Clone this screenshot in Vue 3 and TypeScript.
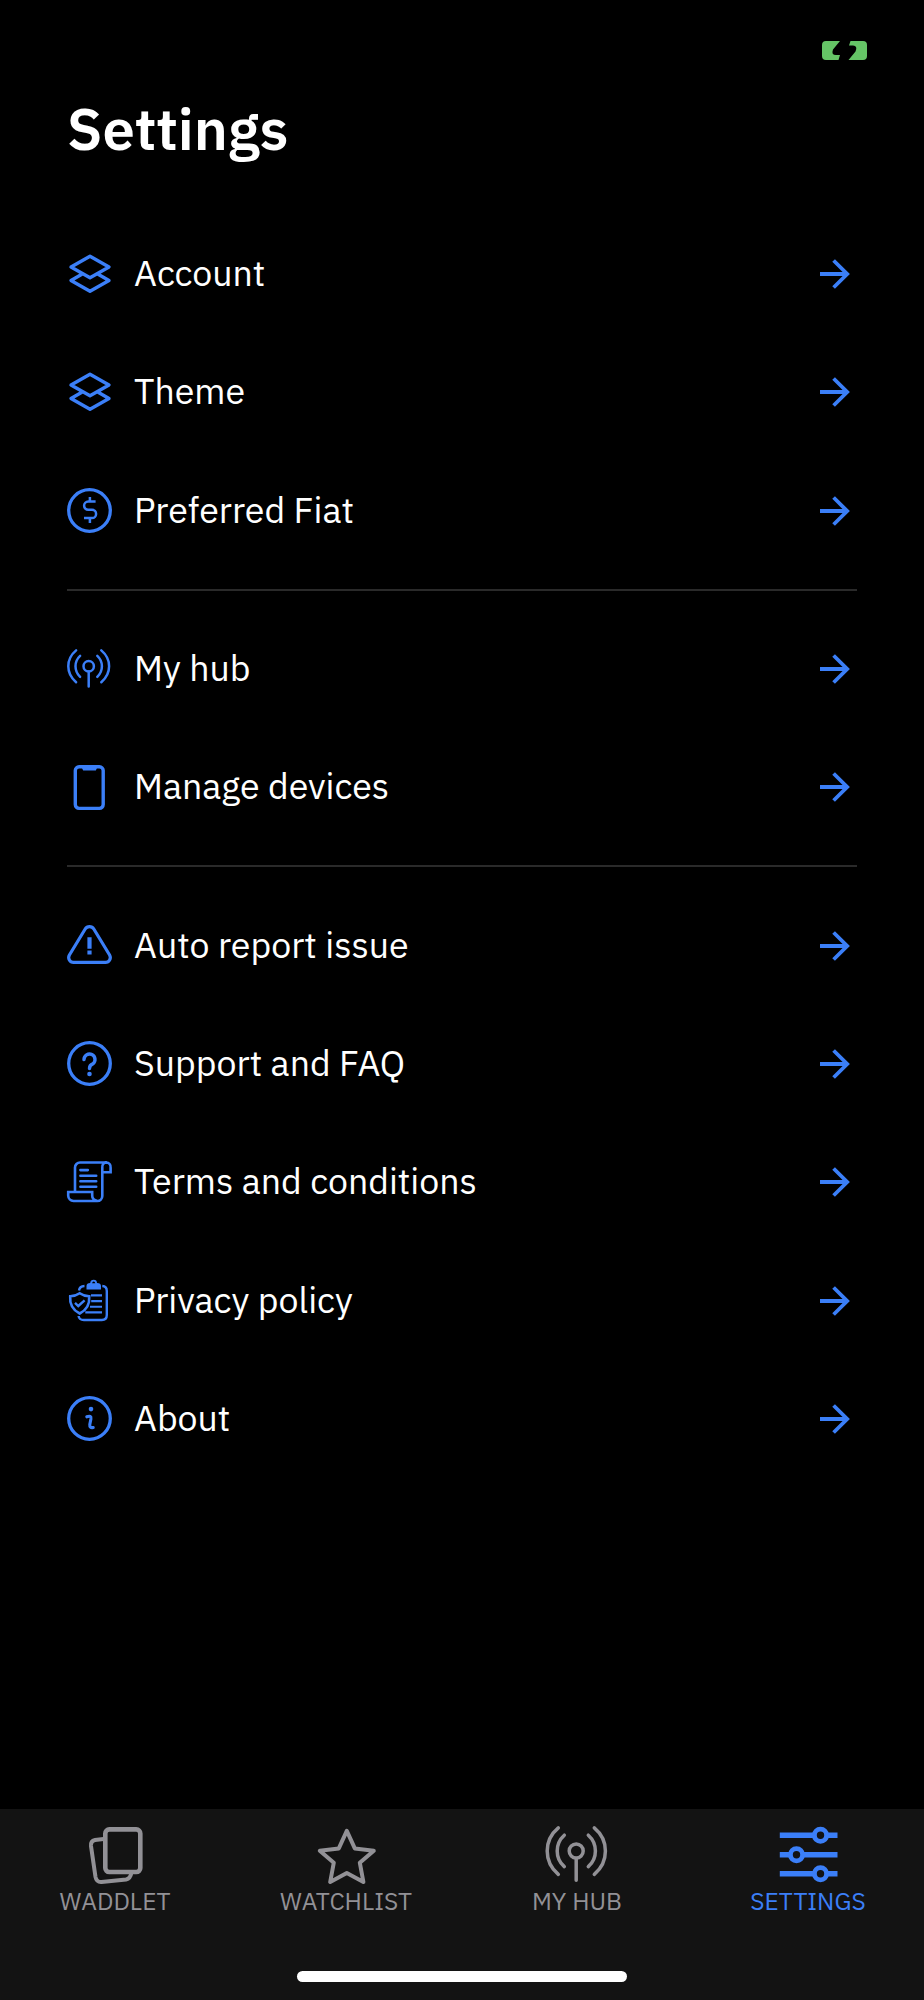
<script setup lang="ts">
interface Row { icon: string; label: string }
interface Tab { icon: string; label: string; active?: boolean }

const groups: Row[][] = [
  [
    { icon: 'layers', label: 'Account' },
    { icon: 'layers', label: 'Theme' },
    { icon: 'dollar', label: 'Preferred Fiat' },
  ],
  [
    { icon: 'hub', label: 'My hub' },
    { icon: 'device', label: 'Manage devices' },
  ],
  [
    { icon: 'alert', label: 'Auto report issue' },
    { icon: 'help', label: 'Support and FAQ' },
    { icon: 'terms', label: 'Terms and conditions' },
    { icon: 'privacy', label: 'Privacy policy' },
    { icon: 'info', label: 'About' },
  ],
]

const tabs: Tab[] = [
  { icon: 'cards', label: 'WADDLET' },
  { icon: 'star', label: 'WATCHLIST' },
  { icon: 'hub', label: 'MY HUB' },
  { icon: 'sliders', label: 'SETTINGS', active: true },
]
</script>

<template>
  <div class="screen">
    <header class="status">
      <svg class="battery" viewBox="0 0 45 19">
        <path d="M4 0H18L11 8.5Q9 14 14 14H18L16.5 19H4Q0 19 0 15V4Q0 0 4 0Z" />
        <path d="M28.5 0H41Q45 0 45 4V15Q45 19 41 19H26.5L33.5 10.5Q36 5 31 4.6H27Z" />
      </svg>
    </header>
    <h1 class="title"><span>Settings</span></h1>

    <main class="list">
      <section v-for="(group, g) in groups" :key="g" class="group">
        <a v-for="row in group" :key="row.label" class="row">
          <svg class="icon" viewBox="0 0 45 45">
            <g v-if="row.icon === 'layers'" stroke-width="3.4">
              <path d="M23 4.2 42 15 23 25.8 4 15ZM15.3 22 4 28.5 23 39.3 42 28.5 30.7 22" stroke-linejoin="round" />
            </g>
            <g v-else-if="row.icon === 'dollar'">
              <circle cx="22.5" cy="22.5" r="20.8" stroke-width="3.3" />
              <path stroke-width="2.5" d="M22.9 9v4.6M22.9 30v5M28.6 13.6H21.2a4.1 4.1 0 0 0 0 8.2h3.8a4.1 4.1 0 0 1 0 8.2h-8" />
            </g>
            <g v-else-if="row.icon === 'hub'" stroke-width="2.5" stroke-linecap="round">
              <path d="M9.1 3.4Q1.3 10 1.3 19.2T9.1 35.2M13.1 8.8Q8.5 13 8.5 19.2T13.1 29.8M34.3 3.4Q42.1 10 42.1 19.2T34.3 35.2M30.3 8.8Q34.9 13 34.9 19.2T30.3 29.8M21.7 24.6V39.6" />
              <circle cx="21.7" cy="19.2" r="5.2" />
            </g>
            <g v-else-if="row.icon === 'device'">
              <rect x="8.3" y="1.8" width="27.9" height="41.6" rx="3.8" stroke-width="3.4" />
              <path class="solid" d="M14.5 2H30.5L28.8 5.5H16.2Z" />
            </g>
            <g v-else-if="row.icon === 'alert'">
              <path stroke-width="3.2" d="M18.2 6a5 5 0 0 1 8.6 0L42.6 32a4.9 4.9 0 0 1-4.2 7.4H6.6A4.9 4.9 0 0 1 2.4 32Z" />
              <path stroke-width="4.2" d="M22.5 14.2V25.8M22.5 27.4V31.6" />
            </g>
            <g v-else-if="row.icon === 'help'">
              <circle cx="22.5" cy="22.5" r="20.8" stroke-width="3.3" />
              <path stroke-width="3.4" stroke-linecap="round" d="M17 18.6a5.5 5.5 0 1 1 8.8 4.3Q22.5 24 22.5 27.6" />
              <circle class="solid" cx="22.5" cy="33" r="2.3" />
            </g>
            <g v-else-if="row.icon === 'terms'" stroke-width="2.6">
              <path d="M8 31.7V7.5a5 5 0 0 1 5-5H39.3a4.3 4.3 0 0 1 4.3 5V12.2H35.3M39.5 2.5a4.2 4.2 0 0 0-4.2 5V36a5 5 0 0 1-5 5H6.6a5.4 5.4 0 0 1-5.4-5.4V32H25.2v3.5a5 5 0 0 0 5 5.3" />
              <path stroke-linecap="round" d="M13.4 10.1H20.8M13.4 15.7H29.2M13.4 21.2H29.2M13.4 26.7H29.2" />
            </g>
            <g v-else-if="row.icon === 'privacy'" stroke-width="2.4">
              <path d="M12 12.5Q12.5 8.2 17.5 8M35.3 8Q39.8 8.2 39.8 13V37Q39.8 42 34.8 42H17Q12 42 11.6 38" />
              <path class="solid" d="M19.5 11.5V8Q19.5 5.2 23.2 5Q23.5 1.8 26.7 1.8T30 5Q34 5.2 34 8V11.5ZM25.1 5.2H28.3Q28 3.6 26.7 3.6T25.1 5.2Z" fill-rule="evenodd" />
              <path stroke-width="2.6" d="M12.7 15.3Q17 18.3 22.2 18.3Q23.2 30 12.7 35.5Q2.2 30 3.2 18.3Q8.4 18.3 12.7 15.3Z" />
              <path d="M8 24.8 11.3 28 17.6 22.3" />
              <path stroke-width="2.1" d="M24 17.4H35M24.2 23.1H35M23 28.8H35M18.3 34.4H35" />
            </g>
            <g v-else>
              <circle cx="22.5" cy="22.5" r="20.8" stroke-width="3.3" />
              <path stroke-width="3.1" stroke-linecap="round" d="M19.8 20.8Q24.6 19 23.9 23L22.8 28.4Q22.4 32.2 26.2 31.5" />
              <circle class="solid" cx="24" cy="13.1" r="2.3" />
            </g>
          </svg>
          <span class="label">{{ row.label }}</span>
          <svg class="arrow" viewBox="0 0 30 30">
            <path d="M0 15H27.5M13.6 1.5 27.2 15 13.6 28.5" />
          </svg>
        </a>
      </section>
    </main>

    <nav class="tabbar">
      <div class="tabs">
        <a v-for="tab in tabs" :key="tab.label" class="tab" :class="{ active: tab.active }">
          <svg class="tab-icon" viewBox="0 0 66 66">
            <g v-if="tab.icon === 'cards'" stroke-width="4">
              <rect x="22.3" y="7.4" width="35" height="42.6" rx="4" stroke-width="4.6" />
              <path d="M20.5 17 12 18Q7.5 19 8 24L12.5 55Q13.5 60.3 18.5 60L43 57.5Q47.5 56.5 48.3 51" />
            </g>
            <path v-else-if="tab.icon === 'star'" stroke-width="4" stroke-linejoin="round" d="M32.8 8.8 40.8 26.4 59.8 28.7 45.8 40.7 49.4 60 32.8 51 16.2 60 19.8 40.7 5.8 28.7 24.8 26.4Z" />
            <g v-else-if="tab.icon === 'hub'" stroke-width="3.5" stroke-linecap="round">
              <path d="M13.3 5.8Q2.2 15 2.2 29T13.3 52.4M19.3 13.2Q12.2 19.5 12.2 29T19.3 44.6M49.3 5.8Q60.4 15 60.4 29T49.3 52.4M43.3 13.2Q50.4 19.5 50.4 29T43.3 44.6M31.2 37V58.2" />
              <circle cx="31.2" cy="29" r="7" />
            </g>
            <g v-else>
              <path stroke-width="5.4" d="M3.8 13.3H38.5M50.5 13.3H61.5M3.8 32.7H14.5M26.5 32.7H61.5M3.8 51.8H38.5M50.5 51.8H61.5" />
              <g stroke-width="4.8">
                <circle cx="44.5" cy="13.3" r="6.1" />
                <circle cx="20.5" cy="32.7" r="6.1" />
                <circle cx="44.5" cy="51.8" r="6.1" />
              </g>
            </g>
          </svg>
          <span class="tab-label">{{ tab.label }}</span>
        </a>
      </div>
      <div class="home-indicator"></div>
    </nav>
  </div>
</template>

<style>
body { background: #000; }
</style>

<style scoped>
.screen {
  width: 924px;
  height: 2000px;
  display: flex;
  flex-direction: column;
  background: #000;
  color: #fff;
  font-family: "IBM Plex Sans", "Open Sans", "Noto Sans", sans-serif;
  overflow: hidden;
}
.status {
  height: 90px;
  box-sizing: border-box;
  padding: 41px 57px 0 0;
  display: flex;
  justify-content: flex-end;
}
.battery { width: 45px; height: 19px; fill: #65c466; }
.title {
  height: 125px;
  margin: 0;
  padding-left: 67px;
  font-size: 58px;
  font-weight: 600;
  line-height: 77px;
}
.list { flex: 1; }
.group { margin: 0 67px; padding-bottom: 19px; }
.group + .group { border-top: 2px solid #2a2a2a; padding-top: 19px; }
.row { height: 118.3px; display: flex; align-items: center; }
.icon {
  width: 45px;
  height: 45px;
  margin-right: 22px;
  fill: none;
  stroke: #3b7ff8;
  overflow: visible;
}
.solid { fill: #3b7ff8; stroke: none; }
.label { flex: 1; font-size: 35.7px; line-height: 46px; padding-bottom: 2px; white-space: nowrap; }
.arrow { width: 30px; height: 30px; margin-right: 7px; fill: none; stroke: #3b7ff8; stroke-width: 3.8; }
.tabbar {
  height: 191px;
  display: flex;
  flex-direction: column;
  align-items: center;
  background: #131313;
}
.tabs { width: 924px; height: 162px; display: flex; }
.tab {
  flex: 1;
  display: flex;
  flex-direction: column;
  align-items: center;
  padding-top: 13px;
  color: #929196;
}
.tab.active { color: #3b7ff8; }
.tab-icon { width: 66px; height: 66px; fill: none; stroke: currentColor; }
.tab-label { font-size: 24.5px; line-height: 32px; margin-top: -3px; margin-right: 1px; }
.home-indicator { width: 330px; height: 11px; border-radius: 6px; background: #fff; }
</style>
